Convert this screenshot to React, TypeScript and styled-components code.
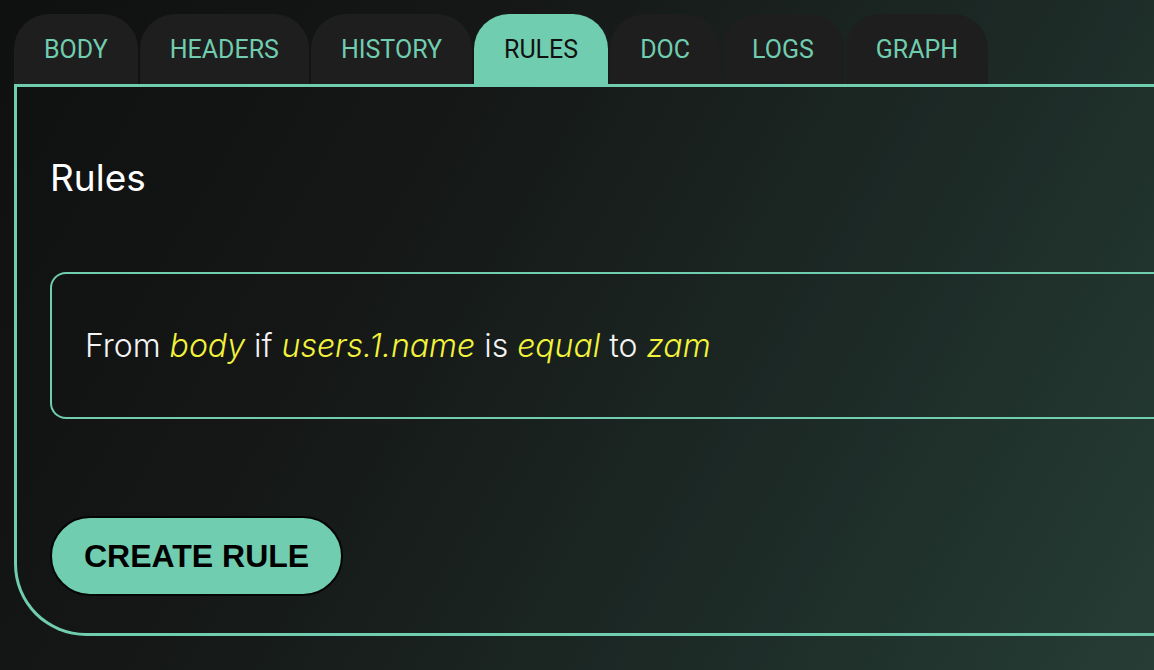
import React from "react";
import styled, { createGlobalStyle } from "styled-components";

const GREEN = "#71cdb0";

const Global = createGlobalStyle`
  html, body {
    margin: 0;
    padding: 0;
    width: 100%;
    height: 100%;
    overflow: hidden;
  }
  body {
    background: linear-gradient(120deg, #0f1010 0%, #151817 35%, #1d2b27 70%, #263d35 100%);
    font-family: "Inter", "Noto Sans", sans-serif;
  }
`;

const Page = styled.div`
  width: 100vw;
  height: 100vh;
  box-sizing: border-box;
  padding: 14px 0 0 14px;
  display: flex;
  flex-direction: column;
`;

const TabBar = styled.div`
  display: flex;
  gap: 2px;
  align-items: flex-end;
`;

const Tab = styled.button<{ $active?: boolean }>`
  height: 70px;
  padding: 0 30px;
  border: none;
  border-radius: 35px 35px 0 0;
  background: ${(p) => (p.$active ? GREEN : "#1e1e1e")};
  color: ${(p) => (p.$active ? "#111111" : GREEN)};
  font-family: "Roboto", "Inter", sans-serif;
  font-size: 25px;
  font-weight: 400;
  display: flex;
  align-items: center;
  justify-content: center;
  cursor: pointer;
`;

const Panel = styled.section`
  margin-right: -60px;
  height: 552px;
  box-sizing: border-box;
  border: 3px solid ${GREEN};
  border-right: none;
  border-radius: 0 0 0 72px;
  padding: 69px 0 0 33px;
  display: flex;
  flex-direction: column;
  align-items: flex-start;
`;

const Title = styled.h2`
  margin: 0;
  font-family: "Inter", sans-serif;
  font-weight: 400;
  font-size: 37px;
  line-height: 44px;
  color: #ffffff;
`;

const RuleBox = styled.div`
  margin-top: 72px;
  align-self: stretch;
  height: 147px;
  box-sizing: border-box;
  border: 2px solid ${GREEN};
  border-right: none;
  border-radius: 16px 0 0 16px;
  padding-left: 33px;
  display: flex;
  align-items: center;
`;

const RuleText = styled.p`
  margin: 0;
  font-family: "Inter", sans-serif;
  font-size: 32px;
  font-weight: 300;
  color: #f4f4f4;
  white-space: pre;
`;

const Token = styled.em`
  font-style: italic;
  color: #f3f33c;
`;

const CreateButton = styled.button`
  margin-top: 97px;
  height: 80px;
  padding: 0 32px;
  border: 2px solid #050505;
  border-radius: 40px;
  background: ${GREEN};
  color: #000;
  font-family: "Liberation Sans", Arial, sans-serif;
  font-weight: 700;
  font-size: 32px;
  cursor: pointer;
`;

const tabs = ["BODY", "HEADERS", "HISTORY", "RULES", "DOC", "LOGS", "GRAPH"];

export default function App() {
  return (
    <>
      <Global />
      <Page>
        <TabBar>
          {tabs.map((t) => (
            <Tab key={t} $active={t === "RULES"}>
              {t}
            </Tab>
          ))}
        </TabBar>
        <Panel>
          <Title>Rules</Title>
          <RuleBox>
            <RuleText>
              From <Token>body</Token> if <Token>users.1.name</Token> is{" "}
              <Token>equal</Token> to <Token>zam</Token>
            </RuleText>
          </RuleBox>
          <CreateButton>CREATE RULE</CreateButton>
        </Panel>
      </Page>
    </>
  );
}
